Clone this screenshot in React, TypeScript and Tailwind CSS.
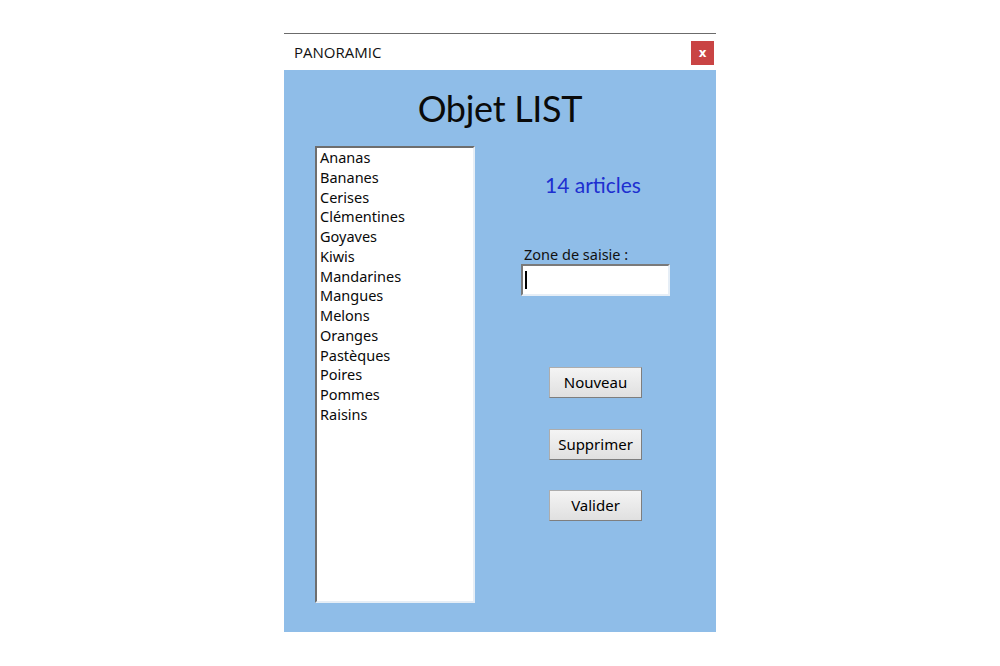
import React from "react";

const fruits = [
  "Ananas",
  "Bananes",
  "Cerises",
  "Clémentines",
  "Goyaves",
  "Kiwis",
  "Mandarines",
  "Mangues",
  "Melons",
  "Oranges",
  "Pastèques",
  "Poires",
  "Pommes",
  "Raisins",
];

function Btn({ label }: { label: string }) {
  return (
    <div className="w-[93px] h-[31px] flex items-center justify-center bg-gradient-to-b from-[#f4f4f4] to-[#e0e0e0] border border-[#adadad] border-b-[#7e7e7e] border-r-[#7e7e7e] text-[15px] text-black leading-none">
      {label}
    </div>
  );
}

export default function App() {
  return (
    <div className="w-[1000px] h-[666px] bg-white relative overflow-hidden" style={{ fontFamily: '"Noto Sans", "Open Sans", sans-serif' }}>
      <div className="ml-[284px] mt-[33px] w-[432px] flex flex-col">
        <div className="h-[1px] bg-[#6b6b6b]" />
        <div className="h-[36px] bg-white flex items-center justify-between pl-[10px] pr-[2px]">
          <span className="text-[15px] text-[#111] leading-none" style={{ fontFamily: '"Open Sans", "Noto Sans", sans-serif' }}>PANORAMIC</span>
          <div className="w-[23px] h-[24px] bg-[#c94444] flex items-center justify-center mt-[2px]">
            <span className="text-white text-[12px] font-bold leading-none" style={{ fontFamily: '"DejaVu Sans", sans-serif' }}>x</span>
          </div>
        </div>
        <div className="h-[562px] bg-[#8fbde8] flex flex-col">
          <div className="h-[76px] flex items-center justify-center">
            <span className="text-[36px] text-[#0a0a0a] leading-none tracking-[-0.3px]" style={{ fontFamily: 'Lato, "Noto Sans", sans-serif' }}>Objet LIST</span>
          </div>
          <div className="flex">
            <div className="ml-[31px] w-[160px] h-[457px] bg-white border-t-2 border-l-2 border-t-[#6e6e6e] border-l-[#6e6e6e] border-b-2 border-r-2 border-b-[#e6eef6] border-r-[#e6eef6] pl-[3px] pt-0">
              {fruits.map((f) => (
                <div key={f} className="h-[19.77px] text-[14.5px] leading-[19.77px] text-[#0a0a0a] whitespace-nowrap">
                  {f}
                </div>
              ))}
            </div>
            <div className="ml-[46px] w-[149px] flex flex-col">
              <div className="mt-[24px] h-[28px] flex items-center justify-center pr-[5px]">
                <span className="text-[21px] text-[#1d2fd0] leading-none" style={{ fontFamily: 'Lato, "Noto Sans", sans-serif' }}>14 articles</span>
              </div>
              <div className="mt-[46px] pl-[3px] text-[14.5px] text-[#111] leading-[20px] h-[20px]">Zone de saisie :</div>
              <div className="mt-0 w-[149px] h-[32px] bg-white border-t-2 border-l-2 border-t-[#7a7a7a] border-l-[#7a7a7a] border-b-2 border-r-2 border-b-[#e6eef6] border-r-[#e6eef6] flex items-center pl-[2px]">
                <div className="w-[1.5px] h-[18px] bg-black" />
              </div>
              <div className="mt-[71px] ml-[28px] flex flex-col gap-[30.5px]">
                <Btn label="Nouveau" />
                <Btn label="Supprimer" />
                <Btn label="Valider" />
              </div>
            </div>
          </div>
        </div>
      </div>
    </div>
  );
}
